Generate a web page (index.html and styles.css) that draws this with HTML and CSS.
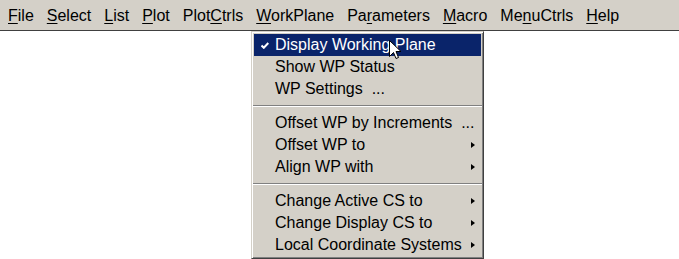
FILE: index.html
```html
<!DOCTYPE html>
<html>
<head>
<meta charset="utf-8">
<link rel="stylesheet" href="styles.css">
</head>
<body>
<div class="menubar">
  <span class="mi"><u>F</u>ile</span>
  <span class="mi"><u>S</u>elect</span>
  <span class="mi"><u>L</u>ist</span>
  <span class="mi"><u>P</u>lot</span>
  <span class="mi">Plot<u>C</u>trls</span>
  <span class="mi"><u>W</u>orkPlane</span>
  <span class="mi">Pa<u>r</u>ameters</span>
  <span class="mi"><u>M</u>acro</span>
  <span class="mi">Me<u>n</u>uCtrls</span>
  <span class="mi"><u>H</u>elp</span>
</div>
<div class="dropdown">
  <div class="row active">
    <svg class="check" width="8" height="7" viewBox="0 0 8 7"><path d="M0.5 3.5 L2.8 5.8 L7.3 1" fill="none" stroke="#fff" stroke-width="2"/></svg>
    <span class="label">Display Working Plane</span>
  </div>
  <div class="row"><span class="label">Show WP Status</span></div>
  <div class="row"><span class="label">WP Settings &nbsp;...</span></div>
  <div class="sep"></div>
  <div class="row"><span class="label">Offset WP by Increments &nbsp;...</span></div>
  <div class="row"><span class="label">Offset WP to</span><span class="arrow"></span></div>
  <div class="row"><span class="label">Align WP with</span><span class="arrow"></span></div>
  <div class="sep"></div>
  <div class="row"><span class="label">Change Active CS to</span><span class="arrow"></span></div>
  <div class="row"><span class="label">Change Display CS to</span><span class="arrow"></span></div>
  <div class="row"><span class="label">Local Coordinate Systems</span><span class="arrow"></span></div>
</div>
<svg class="cursor" width="13" height="21" viewBox="0 0 13 21"><path d="M0.5 0.5 L0.5 16.5 L4.5 12.5 L7 18.5 L9.5 17.5 L7 11.5 L12 11.5 Z" fill="#fff" stroke="#000" stroke-width="1" stroke-linejoin="miter"/></svg>
</body>
</html>
```
FILE: styles.css
```css
html, body {
  margin: 0;
  padding: 0;
  background: #ffffff;
}
body {
  font-family: "Liberation Sans", Arial, sans-serif;
  font-size: 16px;
  color: #000;
  position: relative;
  width: 679px;
  height: 259px;
  overflow: hidden;
}
.menubar {
  width: 677px;
  height: 30px;
  background: #d4d0c8;
  border-right: 1px solid #404040;
  border-bottom: 1px solid #404040;
  display: flex;
  align-items: center;
  gap: 13px;
  padding-left: 8px;
  box-sizing: content-box;
  line-height: 30px;
}
.menubar .mi {
  white-space: nowrap;
  padding-top: 1px;
}
.menubar u {
  text-decoration-thickness: 1px;
  text-underline-offset: 2px;
}
.dropdown {
  position: absolute;
  left: 251px;
  top: 31px;
  width: 227px;
  background: #d4d0c8;
  border-top: 1px solid #d4d0c8;
  border-left: 1px solid #d4d0c8;
  border-right: 1px solid #404040;
  border-bottom: 1px solid #404040;
  box-shadow: inset 1px 1px 0 #ffffff, inset -1px -1px 0 #808080;
  padding: 2px 2px 2px 2px;
  box-sizing: content-box;
}
.row {
  height: 22px;
  display: flex;
  align-items: center;
  position: relative;
  padding-left: 21px;
  white-space: nowrap;
}
.row.active {
  background: #0a246a;
  color: #ffffff;
}
.check {
  position: absolute;
  left: 7px;
  top: 8px;
}
.label {
  flex: 1;
}
.arrow {
  width: 0;
  height: 0;
  border-top: 3.5px solid transparent;
  border-bottom: 3.5px solid transparent;
  border-left: 4px solid #000;
  margin-right: 6px;
}
.sep {
  height: 12px;
  display: flex;
  flex-direction: column;
  justify-content: center;
  margin: 0 -1px;
}
.sep::before {
  content: "";
  display: block;
  height: 1px;
  background: #808080;
  border-bottom: 1px solid #ffffff;
}
.cursor {
  position: absolute;
  left: 389px;
  top: 40px;
}
```
